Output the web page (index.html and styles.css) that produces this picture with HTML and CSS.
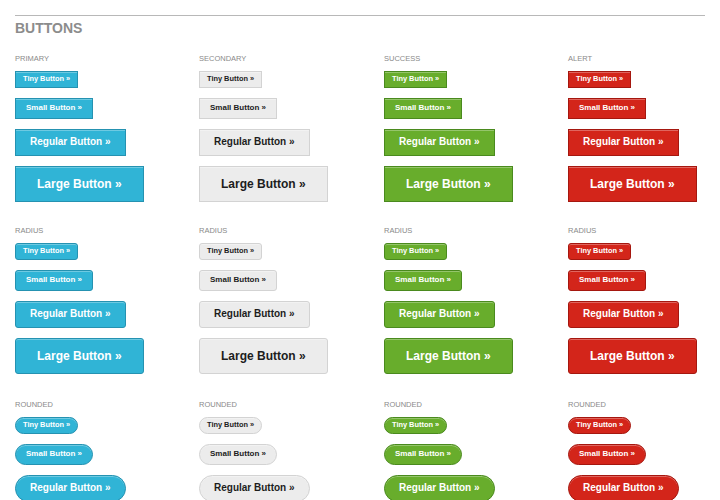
FILE: index.html
```html
<!DOCTYPE html>
<html lang="en">
<head>
    <meta charset="UTF-8">
    <meta name="viewport" content="width=device-width, initial-scale=1.0">
    <title>Buttons</title>
    <link rel="stylesheet" href="styles.css">
</head>
<body>
    <div class="page">
        <hr class="rule">
        <h2 class="title">BUTTONS</h2>

        <!-- plain buttons -->
        <div class="section first">
            <div class="col">
                <h5>PRIMARY</h5>
                <a class="button tiny">Tiny Button &raquo;</a>
                <a class="button small">Small Button &raquo;</a>
                <a class="button">Regular Button &raquo;</a>
                <a class="button large">Large Button &raquo;</a>
            </div>
            <div class="col">
                <h5>SECONDARY</h5>
                <a class="button secondary tiny">Tiny Button &raquo;</a>
                <a class="button secondary small">Small Button &raquo;</a>
                <a class="button secondary">Regular Button &raquo;</a>
                <a class="button secondary large">Large Button &raquo;</a>
            </div>
            <div class="col">
                <h5>SUCCESS</h5>
                <a class="button success tiny">Tiny Button &raquo;</a>
                <a class="button success small">Small Button &raquo;</a>
                <a class="button success">Regular Button &raquo;</a>
                <a class="button success large">Large Button &raquo;</a>
            </div>
            <div class="col">
                <h5>ALERT</h5>
                <a class="button alert tiny">Tiny Button &raquo;</a>
                <a class="button alert small">Small Button &raquo;</a>
                <a class="button alert">Regular Button &raquo;</a>
                <a class="button alert large">Large Button &raquo;</a>
            </div>
        </div>

        <!-- radius buttons -->
        <div class="section second">
            <div class="col">
                <h5>RADIUS</h5>
                <a class="button radius tiny">Tiny Button &raquo;</a>
                <a class="button radius small">Small Button &raquo;</a>
                <a class="button radius">Regular Button &raquo;</a>
                <a class="button radius large">Large Button &raquo;</a>
            </div>
            <div class="col">
                <h5>RADIUS</h5>
                <a class="button secondary radius tiny">Tiny Button &raquo;</a>
                <a class="button secondary radius small">Small Button &raquo;</a>
                <a class="button secondary radius">Regular Button &raquo;</a>
                <a class="button secondary radius large">Large Button &raquo;</a>
            </div>
            <div class="col">
                <h5>RADIUS</h5>
                <a class="button success radius tiny">Tiny Button &raquo;</a>
                <a class="button success radius small">Small Button &raquo;</a>
                <a class="button success radius">Regular Button &raquo;</a>
                <a class="button success radius large">Large Button &raquo;</a>
            </div>
            <div class="col">
                <h5>RADIUS</h5>
                <a class="button alert radius tiny">Tiny Button &raquo;</a>
                <a class="button alert radius small">Small Button &raquo;</a>
                <a class="button alert radius">Regular Button &raquo;</a>
                <a class="button alert radius large">Large Button &raquo;</a>
            </div>
        </div>

        <!-- rounded buttons -->
        <div class="section third">
            <div class="col">
                <h5>ROUNDED</h5>
                <a class="button round tiny">Tiny Button &raquo;</a>
                <a class="button round small">Small Button &raquo;</a>
                <a class="button round">Regular Button &raquo;</a>
                <a class="button round large">Large Button &raquo;</a>
            </div>
            <div class="col">
                <h5>ROUNDED</h5>
                <a class="button secondary round tiny">Tiny Button &raquo;</a>
                <a class="button secondary round small">Small Button &raquo;</a>
                <a class="button secondary round">Regular Button &raquo;</a>
                <a class="button secondary round large">Large Button &raquo;</a>
            </div>
            <div class="col">
                <h5>ROUNDED</h5>
                <a class="button success round tiny">Tiny Button &raquo;</a>
                <a class="button success round small">Small Button &raquo;</a>
                <a class="button success round">Regular Button &raquo;</a>
                <a class="button success round large">Large Button &raquo;</a>
            </div>
            <div class="col">
                <h5>ROUNDED</h5>
                <a class="button alert round tiny">Tiny Button &raquo;</a>
                <a class="button alert round small">Small Button &raquo;</a>
                <a class="button alert round">Regular Button &raquo;</a>
                <a class="button alert round large">Large Button &raquo;</a>
            </div>
        </div>
    </div>
</body>
</html>
```

FILE: styles.css
```css
* {
    margin: 0;
    padding: 0;
    box-sizing: border-box;
}

body {
    background-color: #fff;
    font-family: "Liberation Sans", Arial, sans-serif;
}

.page {
    padding: 15px 15px 0;
}

.rule {
    border: none;
    border-top: 1px solid #b8b8b8;
    height: 0;
}

.title {
    margin-top: 4px;
    font-size: 14px;
    line-height: 16px;
    font-weight: bold;
    color: #8c8c8c;
}

/* 四列布局 */
.section {
    display: grid;
    grid-template-columns: 184px 185px 184px 185px;
}

.section.first {
    margin-top: 18px;
}

.section.second {
    margin-top: 24px;
}

.section.third {
    margin-top: 26px;
}

.col {
    display: flex;
    flex-direction: column;
    align-items: flex-start;
    gap: 10px;
}

.col h5 {
    font-size: 7.5px;
    line-height: 10px;
    font-weight: normal;
    color: #8a8a8a;
    margin-bottom: -3px;
}

/* 按钮 */
.button {
    display: inline-block;
    background-color: #30b4d6;
    border: 1px solid #2592b1;
    box-shadow: 0 1px 0 rgba(255, 255, 255, 0.3) inset;
    color: #fff;
    font-weight: bold;
    text-align: center;
    text-decoration: none;
    white-space: nowrap;
    cursor: pointer;
    font-size: 10px;
    line-height: 10px;
    padding: 7px 14px 8px;
}

.button.tiny {
    font-size: 7.4px;
    line-height: 8px;
    padding: 3px 7px 4px;
}

.button.small {
    font-size: 8px;
    line-height: 8px;
    padding: 5px 10px 6px;
}

.button.large {
    font-size: 12px;
    line-height: 12px;
    padding: 11px 21px;
}

.button.secondary {
    background-color: #ececec;
    border-color: #d3d3d3;
    color: #1d1d1d;
}

.button.success {
    background-color: #68ad2c;
    border-color: #4a8a1e;
}

.button.alert {
    background-color: #d3251a;
    border-color: #a5170f;
}

.button.radius {
    border-radius: 3px;
}

.button.round {
    border-radius: 1000px;
}
```
